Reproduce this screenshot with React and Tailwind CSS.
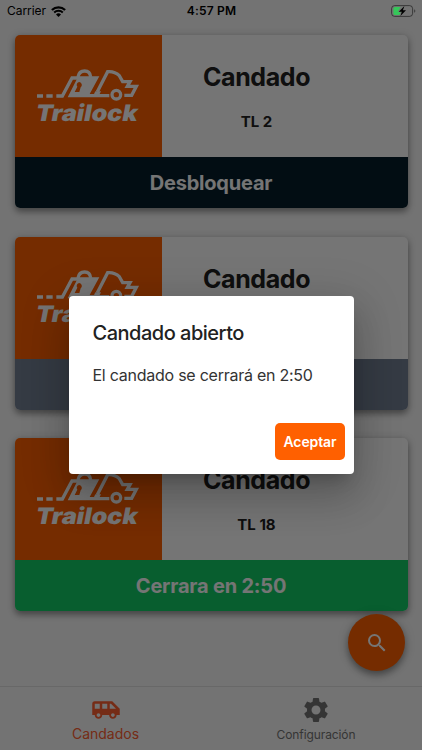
import React from 'react'
import { MdAirportShuttle, MdSearch, MdSettings } from 'react-icons/md'

const locks = [
  { id: 1, name: 'TL 2', action: 'Desbloquear', bar: 'bg-[#061e2a]' },
  { id: 2, name: '', action: '', bar: 'bg-[#758294]' },
  { id: 3, name: 'TL 18', action: 'Cerrara en 2:50', bar: 'bg-[#12cc66]' },
]

function StatusBar() {
  return (
    <header className="grid h-[22px] grid-cols-3 items-center pl-[7px] pr-[6px] text-black">
      <div className="flex items-center gap-[5px]">
        <span className="text-[12px] tracking-[-0.05px]">Carrier</span>
        <svg viewBox="0 0 15 11" className="h-[11px] w-[15px]">
          <path d="M0.9 4 A9.6 9.6 0 0 1 14.1 4" fill="none" stroke="currentColor" strokeWidth="2.3" />
          <path d="M3.2 6.5 A6.2 6.2 0 0 1 11.8 6.5" fill="none" stroke="currentColor" strokeWidth="2" />
          <path d="M7.5 11 L5 8.5 A3.5 3.5 0 0 1 10 8.5 Z" fill="currentColor" />
        </svg>
      </div>
      <span className="text-center text-[12px] font-semibold tracking-[0.2px]">4:57 PM</span>
      <svg viewBox="0 0 25 12" className="relative z-10 h-[12px] w-[25px] justify-self-end">
        <rect x="0.6" y="0.6" width="21" height="10.8" rx="3" fill="none" stroke="#000" strokeOpacity="0.5" />
        <path d="M4 2h5.5L7 7h2.4l-.9 3H4a1.6 1.6 0 0 1-1.6-1.6V3.6A1.6 1.6 0 0 1 4 2z" fill="#35c759" />
        <path d="M13.4 1 L7.8 6.8 H10.8 L9.4 11 L15 5.2 H11.9 Z" fill="#000" />
        <path d="M23.2 4.2v3.6a2 2 0 0 0 0-3.6z" fill="#000" fillOpacity="0.5" />
      </svg>
    </header>
  )
}

function Logo() {
  return (
    <svg viewBox="70 98 330 200" className="h-[66.67px] w-[110px] overflow-visible text-white">
      {/* Road dashes */}
      <path d="M82 192h18v10H82zM110 192h19v10h-19z" fill="currentColor" />
      {/* Trailer */}
      <path d="M140 197h18l29-54h22" fill="none" stroke="currentColor" strokeWidth="10" />
      <path d="M206 138h63l-29 53h59v10H174z" fill="currentColor" />
      <path d="M205 140c2-12 10-18 20-18s17 7 18 18" fill="none" stroke="currentColor" strokeWidth="10" />
      <path d="M209 155a9 9 0 0 1 4 16l-4 14h-14l8-16a8.5 8.5 0 0 1 6-14z" fill="#ff6000" />
      {/* Cab */}
      <path
        d="M263 184l31-60c14-1 27 4 35 12l10 18h22l-8 14h27l-14 27h-22"
        fill="none"
        stroke="currentColor"
        strokeWidth="10"
      />
      <path d="M257 183h17l-4 8h-17z" fill="currentColor" />
      <circle cx="320" cy="193" r="13" fill="none" stroke="currentColor" strokeWidth="10" />
      <text
        transform="translate(75 273) skewX(-11)"
        textLength="305"
        lengthAdjust="spacingAndGlyphs"
        fill="currentColor"
        className="font-['Inter',sans-serif] text-[68px] font-black"
      >
        Trailock
      </text>
    </svg>
  )
}

function LockCard({ lock }) {
  return (
    <article className="h-[173px] overflow-hidden rounded-[5px] bg-white shadow-[0_4px_6px_rgba(0,0,0,0.3),0_1px_8px_rgba(0,0,0,0.2)]">
      <div className="flex h-[122px]">
        <div className="flex w-[147.5px] items-center justify-center bg-[#ff6000]">
          <Logo />
        </div>
        <div className="flex w-[189px] flex-col items-center pt-[27px] text-[#212121]">
          <h2 className="text-[25px] font-bold leading-[30px] tracking-[-0.4px]">Candado</h2>
          {lock.name && (
            <p className="mt-[21px] text-[15px] font-bold leading-[18px]">{lock.name}</p>
          )}
        </div>
      </div>
      <div
        className={`flex h-[51px] items-center justify-center text-[20px] font-bold tracking-[-0.2px] text-white ${lock.bar}`}
      >
        {lock.action}
      </div>
    </article>
  )
}

function BottomNav() {
  return (
    <nav className="grid h-[64px] grid-cols-2 border-t border-[#e2e2e2] bg-[#fafafa]">
      <a className="flex flex-col items-center pt-[8px] text-[#ff6030]">
        <MdAirportShuttle className="h-[30px] w-[30px]" />
        <span className="text-[14px] leading-[17px]">Candados</span>
      </a>
      <a className="flex flex-col items-center pt-[8px] pr-[1px] text-[#757575]">
        <MdSettings className="h-[30px] w-[30px]" />
        <span className="mt-[1px] text-[12px] leading-[17px] tracking-[-0.1px]">Configuración</span>
      </a>
    </nav>
  )
}

function LockDialog() {
  return (
    <div className="absolute inset-0 flex items-center justify-center bg-black/54 pt-[20px]">
      <div
        role="dialog"
        className="flex h-[178px] w-[285px] flex-col rounded-[4px] bg-white pt-[24px] shadow-[0_11px_15px_-7px_rgba(0,0,0,0.2),0_24px_38px_3px_rgba(0,0,0,0.14),0_9px_46px_8px_rgba(0,0,0,0.12)]"
      >
        <h1 className="px-6 text-[20px] font-medium leading-[26px] tracking-[-0.5px] text-[#212121]">
          Candado abierto
        </h1>
        <p className="mt-[19px] px-6 text-[16px] leading-[20px] tracking-[-0.25px] text-[#333333]">
          El candado se cerrará en 2:50
        </p>
        <div className="mt-auto flex justify-end pb-[14px] pr-[8.5px]">
          <button className="h-[37px] w-[70px] rounded-[5px] bg-[#ff6000] text-[14px] font-semibold tracking-[-0.1px] text-white">
            Aceptar
          </button>
        </div>
      </div>
    </div>
  )
}

export default function App() {
  return (
    <div className="relative flex h-[750px] w-[422px] flex-col overflow-hidden bg-[#fafafa] font-['Inter',sans-serif]">
      <StatusBar />
      <main className="flex flex-1 flex-col gap-[28.7px] px-[14.5px] pt-[13px]">
        {locks.map((lock) => (
          <LockCard key={lock.id} lock={lock} />
        ))}
      </main>
      <BottomNav />
      <button className="absolute bottom-[79px] right-[17px] flex h-[57px] w-[57px] items-center justify-center rounded-full bg-[#ff6000] text-white shadow-[0_4px_7px_rgba(0,0,0,0.35),0_1px_12px_rgba(0,0,0,0.15)]">
        <MdSearch className="h-[24px] w-[24px]" />
      </button>
      <LockDialog />
    </div>
  )
}
